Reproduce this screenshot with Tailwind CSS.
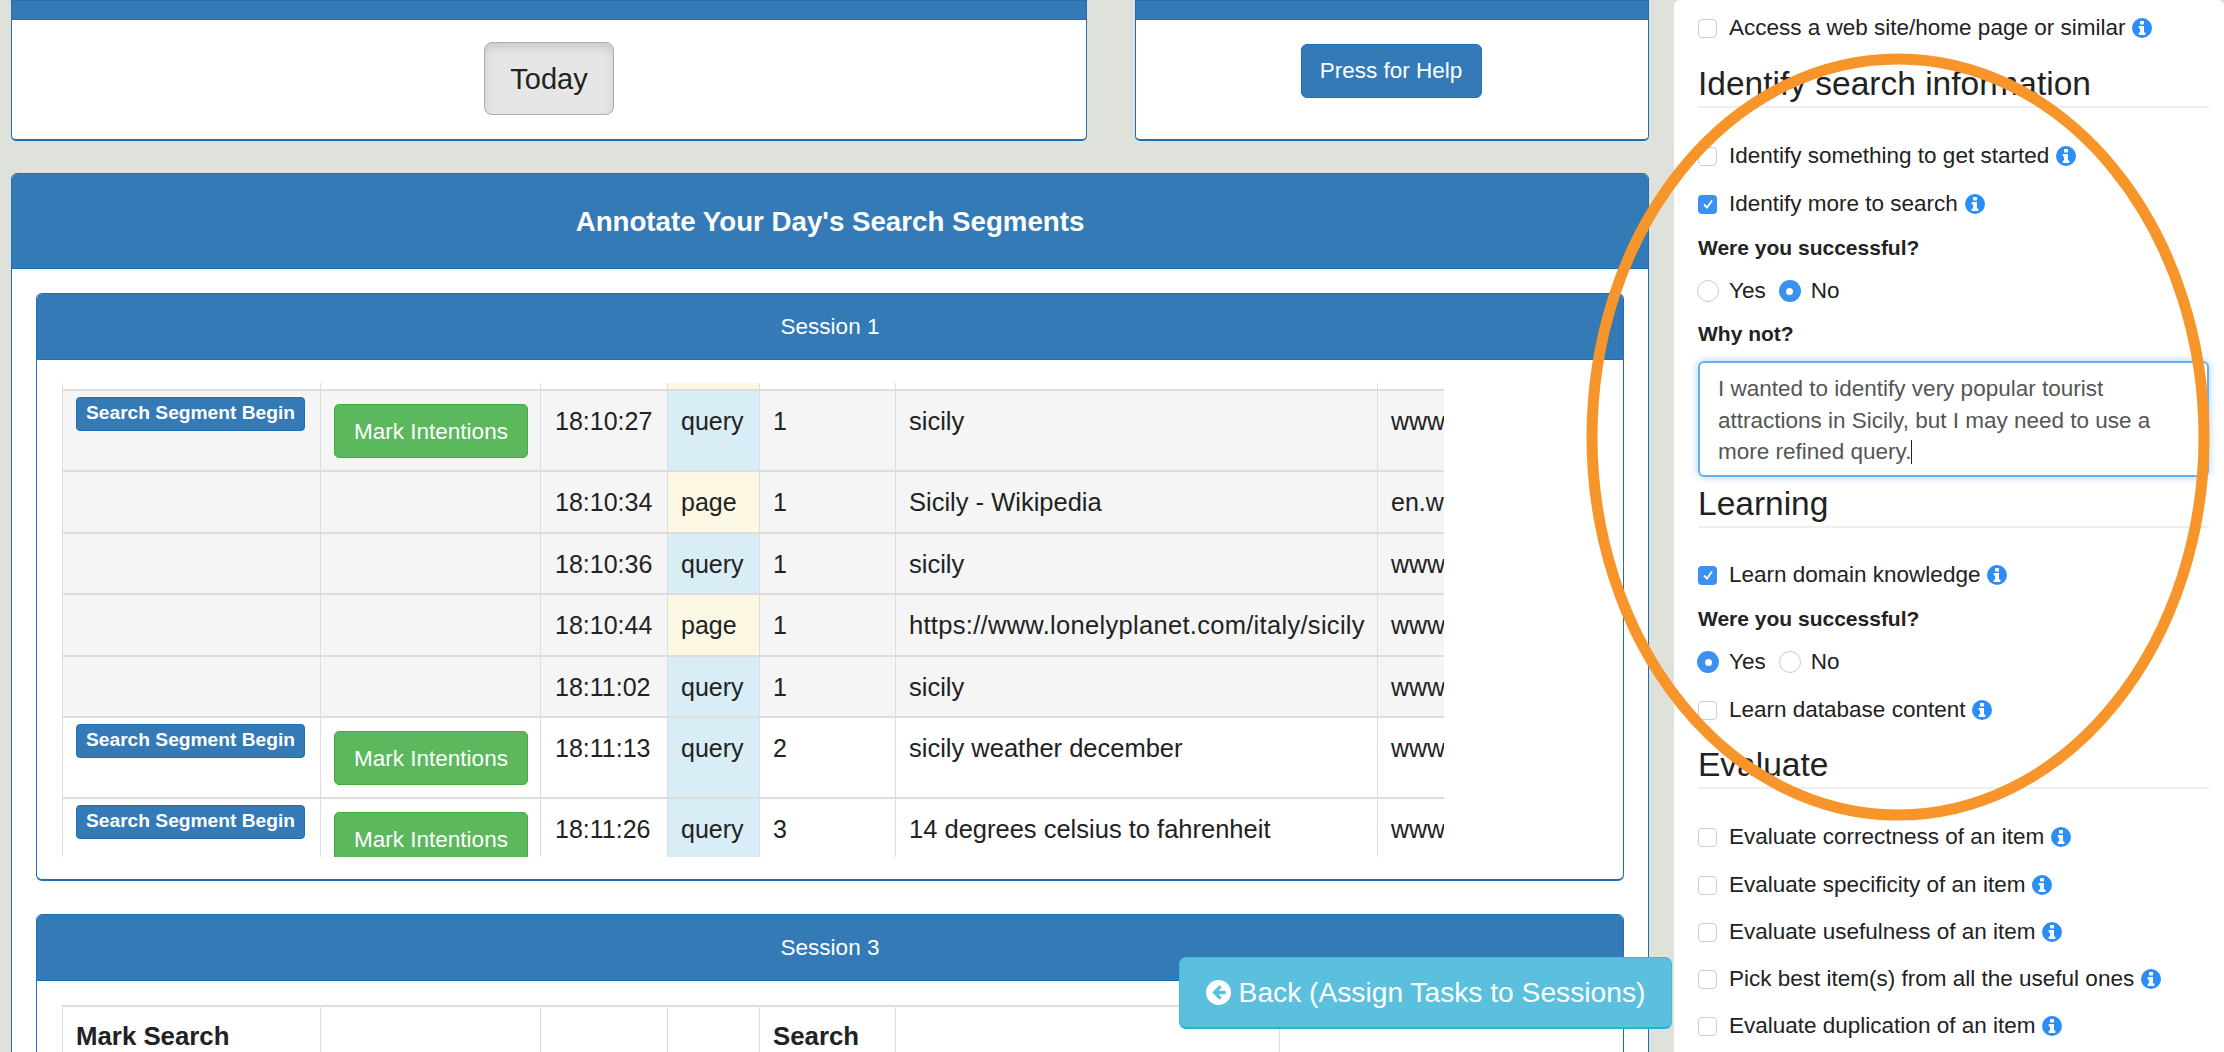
<!doctype html>
<html><head><meta charset="utf-8"><script src="https://cdn.jsdelivr.net/npm/@tailwindcss/browser@4"></script></head>
<body class="bg-[#dfe2db] font-['Liberation_Sans',Arial,sans-serif] text-[#333]">
<div class="relative h-[1052px] w-[2224px] overflow-hidden flex pl-[11px] gap-[25px]">

<div class="w-[1638px] shrink-0">
  <div class="flex gap-[48px] h-[141px]">
    <div class="w-[1076px] bg-white border border-[#1e6fb5] border-b-2 rounded-b-[5px] flex flex-col">
      <div class="h-[19px] bg-[#337ab7] border-b border-[#1e6fb5]"></div>
      <div class="flex-1 flex items-center justify-center pb-[2px]"><button class="w-[130px] h-[73px] bg-[#e6e6e6] border border-[#adadad] rounded-[8px] shadow-[inset_0_5px_8px_rgba(0,0,0,.12)] text-[29px] text-[#222] pt-[3px]">Today</button></div>
    </div>
    <div class="w-[514px] bg-white border border-[#1e6fb5] border-b-2 rounded-b-[5px] flex flex-col">
      <div class="h-[19px] bg-[#337ab7] border-b border-[#1e6fb5]"></div>
      <div class="flex-1 flex justify-center pt-[24px] pr-[2px]"><button class="w-[181px] h-[54px] bg-[#337ab7] border border-[#1e6fb5] rounded-[6px] text-[22.5px] text-white">Press for Help</button></div>
    </div>
  </div>

  <div class="mt-[32px] bg-white border border-[#1e6fb5] rounded-t-[6px] h-[900px]">
    <div class="h-[95px] bg-[#337ab7] border-b border-[#1e6fb5] flex items-center justify-center text-white font-bold text-[27.7px] rounded-t-[5px] pt-[2px]">Annotate Your Day's Search Segments</div>
    <div class="px-[24px] pt-[24px]">

      <div class="border border-[#1e6fb5] border-b-2 rounded-[6px] h-[588px]">
        <div class="h-[66px] bg-[#337ab7] border-b border-[#1e6fb5] rounded-t-[5px] flex items-center justify-center text-white text-[22.5px] pt-[1px]">Session 1</div>
        <div class="pt-[23px] pl-[25px]">
          <div class="w-[1382px] h-[474px] overflow-hidden">
            <table class="table-fixed border-collapse w-[1635px] text-[25px] text-[#222] leading-[33px]">
              <colgroup><col class="w-[258px]"><col class="w-[220px]"><col class="w-[127px]"><col class="w-[92px]"><col class="w-[136px]"><col class="w-[482px]"><col class="w-[320px]"></colgroup>
              <tbody>
                <tr class="h-[7px]"><td class="p-0 border-x border-[#ddd]"></td><td class="p-0 border-x border-[#ddd]"></td><td class="p-0 border-x border-[#ddd]"></td><td class="p-0 border-x border-[#ddd] bg-[#fcf8e3]"></td><td class="p-0 border-x border-[#ddd]"></td><td class="p-0 border-x border-[#ddd]"></td><td class="p-0 border-x border-[#ddd]"></td></tr>

                <tr class="h-[81px] bg-[#f5f5f5] align-top">
                  <td class="border-x border-t-2 border-[#ddd] pt-[6px] pl-[13px]"><button class="w-[229px] h-[34px] bg-[#337ab7] border border-[#1e6fb5] rounded-[4px] text-white font-bold text-[19.2px] leading-[26px] pb-[2px] block">Search Segment Begin</button></td>
                  <td class="border-x border-t-2 border-[#ddd] pt-[13px] pl-[13px]"><button class="w-[194px] h-[54px] bg-[#5cb85c] border border-[#3fad3f] rounded-[5px] text-white text-[22.5px] block">Mark Intentions</button></td>
                  <td class="border-x border-t-2 border-[#ddd] pt-[14px] pl-[14px]">18:10:27</td>
                  <td class="border-x border-t-2 border-[#ddd] pt-[14px] pl-[13px] bg-[#d9edf7]">query</td>
                  <td class="border-x border-t-2 border-[#ddd] pt-[14px] pl-[13px]">1</td>
                  <td class="border-x border-t-2 border-[#ddd] pt-[14px] pl-[13px] text-[25.5px]">sicily</td>
                  <td class="border-x border-t-2 border-[#ddd] pt-[14px] pl-[13px]">www.google.com</td>
                </tr>
                <tr class="h-[62px] bg-[#f5f5f5] align-top">
                  <td class="border-x border-t-2 border-[#ddd]"></td><td class="border-x border-t-2 border-[#ddd]"></td>
                  <td class="border-x border-t-2 border-[#ddd] pt-[14px] pl-[14px]">18:10:34</td>
                  <td class="border-x border-t-2 border-[#ddd] pt-[14px] pl-[13px] bg-[#fcf8e3]">page</td>
                  <td class="border-x border-t-2 border-[#ddd] pt-[14px] pl-[13px]">1</td>
                  <td class="border-x border-t-2 border-[#ddd] pt-[14px] pl-[13px] text-[25.5px]">Sicily - Wikipedia</td>
                  <td class="border-x border-t-2 border-[#ddd] pt-[14px] pl-[13px]">en.wikipedia.org</td>
                </tr>
                <tr class="h-[61px] bg-[#f5f5f5] align-top">
                  <td class="border-x border-t-2 border-[#ddd]"></td><td class="border-x border-t-2 border-[#ddd]"></td>
                  <td class="border-x border-t-2 border-[#ddd] pt-[14px] pl-[14px]">18:10:36</td>
                  <td class="border-x border-t-2 border-[#ddd] pt-[14px] pl-[13px] bg-[#d9edf7]">query</td>
                  <td class="border-x border-t-2 border-[#ddd] pt-[14px] pl-[13px]">1</td>
                  <td class="border-x border-t-2 border-[#ddd] pt-[14px] pl-[13px] text-[25.5px]">sicily</td>
                  <td class="border-x border-t-2 border-[#ddd] pt-[14px] pl-[13px]">www.google.com</td>
                </tr>
                <tr class="h-[62px] bg-[#f5f5f5] align-top">
                  <td class="border-x border-t-2 border-[#ddd]"></td><td class="border-x border-t-2 border-[#ddd]"></td>
                  <td class="border-x border-t-2 border-[#ddd] pt-[14px] pl-[14px]">18:10:44</td>
                  <td class="border-x border-t-2 border-[#ddd] pt-[14px] pl-[13px] bg-[#fcf8e3]">page</td>
                  <td class="border-x border-t-2 border-[#ddd] pt-[14px] pl-[13px]">1</td>
                  <td class="border-x border-t-2 border-[#ddd] pt-[14px] pl-[13px] text-[25.5px] tracking-[0.3px] whitespace-nowrap">https://www.lonelyplanet.com/italy/sicily</td>
                  <td class="border-x border-t-2 border-[#ddd] pt-[14px] pl-[13px]">www.lonelyplanet.com</td>
                </tr>
                <tr class="h-[61px] bg-[#f5f5f5] align-top">
                  <td class="border-x border-t-2 border-[#ddd]"></td><td class="border-x border-t-2 border-[#ddd]"></td>
                  <td class="border-x border-t-2 border-[#ddd] pt-[14px] pl-[14px]">18:11:02</td>
                  <td class="border-x border-t-2 border-[#ddd] pt-[14px] pl-[13px] bg-[#d9edf7]">query</td>
                  <td class="border-x border-t-2 border-[#ddd] pt-[14px] pl-[13px]">1</td>
                  <td class="border-x border-t-2 border-[#ddd] pt-[14px] pl-[13px] text-[25.5px]">sicily</td>
                  <td class="border-x border-t-2 border-[#ddd] pt-[14px] pl-[13px]">www.google.com</td>
                </tr>
                <tr class="h-[81px] align-top">
                  <td class="border-x border-t-2 border-[#ddd] pt-[6px] pl-[13px]"><button class="w-[229px] h-[34px] bg-[#337ab7] border border-[#1e6fb5] rounded-[4px] text-white font-bold text-[19.2px] leading-[26px] pb-[2px] block">Search Segment Begin</button></td>
                  <td class="border-x border-t-2 border-[#ddd] pt-[13px] pl-[13px]"><button class="w-[194px] h-[54px] bg-[#5cb85c] border border-[#3fad3f] rounded-[5px] text-white text-[22.5px] block">Mark Intentions</button></td>
                  <td class="border-x border-t-2 border-[#ddd] pt-[14px] pl-[14px]">18:11:13</td>
                  <td class="border-x border-t-2 border-[#ddd] pt-[14px] pl-[13px] bg-[#d9edf7]">query</td>
                  <td class="border-x border-t-2 border-[#ddd] pt-[14px] pl-[13px]">2</td>
                  <td class="border-x border-t-2 border-[#ddd] pt-[14px] pl-[13px] text-[25.5px]">sicily weather december</td>
                  <td class="border-x border-t-2 border-[#ddd] pt-[14px] pl-[13px]">www.google.com</td>
                </tr>
                <tr class="h-[81px] align-top">
                  <td class="border-x border-t-2 border-[#ddd] pt-[6px] pl-[13px]"><button class="w-[229px] h-[34px] bg-[#337ab7] border border-[#1e6fb5] rounded-[4px] text-white font-bold text-[19.2px] leading-[26px] pb-[2px] block">Search Segment Begin</button></td>
                  <td class="border-x border-t-2 border-[#ddd] pt-[13px] pl-[13px]"><button class="w-[194px] h-[54px] bg-[#5cb85c] border border-[#3fad3f] rounded-[5px] text-white text-[22.5px] block">Mark Intentions</button></td>
                  <td class="border-x border-t-2 border-[#ddd] pt-[14px] pl-[14px]">18:11:26</td>
                  <td class="border-x border-t-2 border-[#ddd] pt-[14px] pl-[13px] bg-[#d9edf7]">query</td>
                  <td class="border-x border-t-2 border-[#ddd] pt-[14px] pl-[13px]">3</td>
                  <td class="border-x border-t-2 border-[#ddd] pt-[14px] pl-[13px] text-[25.5px]">14 degrees celsius to fahrenheit</td>
                  <td class="border-x border-t-2 border-[#ddd] pt-[14px] pl-[13px]">www.google.com</td>
                </tr>
              </tbody>
            </table>
          </div>
        </div>
      </div>

      <div class="mt-[33px] border border-[#1e6fb5] rounded-t-[6px] h-[300px]">
        <div class="h-[66px] bg-[#337ab7] border-b border-[#1e6fb5] rounded-t-[5px] flex items-center justify-center text-white text-[22.5px] pt-[1px]">Session 3</div>
        <div class="pt-[24px] pl-[25px]">
          <table class="table-fixed border-collapse w-full text-[25.8px] text-[#222] leading-[33px] font-bold">
            <colgroup><col class="w-[258px]"><col class="w-[220px]"><col class="w-[127px]"><col class="w-[92px]"><col class="w-[136px]"><col class="w-[384px]"><col></colgroup>
            <tbody><tr class="h-[100px] align-top">
              <td class="border-x border-t-2 border-[#ddd] pt-[13px] pl-[13px]">Mark Search</td>
              <td class="border-x border-t-2 border-[#ddd]"></td>
              <td class="border-x border-t-2 border-[#ddd]"></td>
              <td class="border-x border-t-2 border-[#ddd]"></td>
              <td class="border-x border-t-2 border-[#ddd] pt-[13px] pl-[13px]">Search</td>
              <td class="border-x border-t-2 border-[#ddd]"></td>
              <td class="border-l border-t-2 border-[#ddd]"></td>
            </tr></tbody>
          </table>
        </div>
      </div>
    </div>
  </div>
</div>

<aside class="flex-1 bg-white rounded-t-[6px] pl-[24px] pr-[15px] text-[22.5px] text-[#222]">
  <div class="mt-[4px] h-[48px] flex items-center"><span class="w-[19px] h-[19px] rounded-[4px] border border-[#ccc] mr-[12px] shrink-0"></span>Access a web site/home page or similar<svg class="ml-[7px] w-[20px] h-[20px]" viewBox="0 0 20 20"><circle cx="10" cy="10" r="10" fill="#2b8df5"/><rect x="8" y="3" width="4" height="3.4" rx=".6" fill="#fff"/><path d="M6.7 8h5.3v6.4h1.4V17H6.7v-2.6h1.4v-3.8H6.7z" fill="#fff"/></svg></div>
  <h2 class="mt-[8px] h-[48px] flex items-center border-b-[2px] border-[#eee] text-[33.5px] text-[#222] pt-[2px]">Identify search information</h2>
  <div class="mt-[24px] h-[48px] flex items-center"><span class="w-[19px] h-[19px] rounded-[4px] border border-[#ccc] mr-[12px] shrink-0"></span>Identify something to get started<svg class="ml-[7px] w-[20px] h-[20px]" viewBox="0 0 20 20"><circle cx="10" cy="10" r="10" fill="#2b8df5"/><rect x="8" y="3" width="4" height="3.4" rx=".6" fill="#fff"/><path d="M6.7 8h5.3v6.4h1.4V17H6.7v-2.6h1.4v-3.8H6.7z" fill="#fff"/></svg></div>
  <div class="h-[48px] flex items-center"><span class="w-[19px] h-[19px] rounded-[4px] bg-[#3b90f0] mr-[12px] shrink-0 flex items-center justify-center"><svg class="w-[12px] h-[12px]" viewBox="0 0 12 12"><path d="M2 6.5l3 3 5-7" fill="none" stroke="#fff" stroke-width="1.8"/></svg></span>Identify more to search<svg class="ml-[7px] w-[20px] h-[20px]" viewBox="0 0 20 20"><circle cx="10" cy="10" r="10" fill="#2b8df5"/><rect x="8" y="3" width="4" height="3.4" rx=".6" fill="#fff"/><path d="M6.7 8h5.3v6.4h1.4V17H6.7v-2.6h1.4v-3.8H6.7z" fill="#fff"/></svg></div>
  <div class="h-[40px] flex items-center font-bold text-[21px]">Were you successful?</div>
  <div class="mt-[3px] h-[40px] flex items-center"><span class="w-[22px] h-[22px] -ml-[1px] rounded-full border border-[#ccc] mr-[10px] shrink-0"></span>Yes<span class="w-[22px] h-[22px] rounded-full bg-[#3b90f0] ml-[13px] mr-[10px] shrink-0 flex items-center justify-center"><span class="w-[7px] h-[7px] rounded-full bg-white"></span></span>No</div>
  <div class="mt-[3px] h-[40px] flex items-center font-bold text-[21px]">Why not?</div>
  <div class="mt-[7px] h-[116px] w-[511px] border-2 border-[#66afe9] rounded-[6px] shadow-[0_0_8px_rgba(102,175,233,.6)] pl-[18px] pr-[16px] pt-[10px] text-[22.5px] leading-[31.5px] text-[#555]">I wanted to identify very popular tourist attractions in Sicily, but I may need to use a more refined query.<span class="inline-block w-px h-[24px] bg-[#222] align-[-5px]"></span></div>
  <h2 class="mt-[3px] h-[48px] flex items-center border-b-[2px] border-[#eee] text-[33.5px] text-[#222] pt-[2px]">Learning</h2>
  <div class="mt-[23px] h-[48px] flex items-center"><span class="w-[19px] h-[19px] rounded-[4px] bg-[#3b90f0] mr-[12px] shrink-0 flex items-center justify-center"><svg class="w-[12px] h-[12px]" viewBox="0 0 12 12"><path d="M2 6.5l3 3 5-7" fill="none" stroke="#fff" stroke-width="1.8"/></svg></span>Learn domain knowledge<svg class="ml-[7px] w-[20px] h-[20px]" viewBox="0 0 20 20"><circle cx="10" cy="10" r="10" fill="#2b8df5"/><rect x="8" y="3" width="4" height="3.4" rx=".6" fill="#fff"/><path d="M6.7 8h5.3v6.4h1.4V17H6.7v-2.6h1.4v-3.8H6.7z" fill="#fff"/></svg></div>
  <div class="h-[40px] flex items-center font-bold text-[21px]">Were you successful?</div>
  <div class="mt-[3px] h-[40px] flex items-center"><span class="w-[22px] h-[22px] -ml-[1px] rounded-full bg-[#3b90f0] mr-[10px] shrink-0 flex items-center justify-center"><span class="w-[7px] h-[7px] rounded-full bg-white"></span></span>Yes<span class="w-[22px] h-[22px] rounded-full border border-[#ccc] ml-[13px] mr-[10px] shrink-0"></span>No</div>
  <div class="mt-[4px] h-[48px] flex items-center"><span class="w-[19px] h-[19px] rounded-[4px] border border-[#ccc] mr-[12px] shrink-0"></span>Learn database content<svg class="ml-[7px] w-[20px] h-[20px]" viewBox="0 0 20 20"><circle cx="10" cy="10" r="10" fill="#2b8df5"/><rect x="8" y="3" width="4" height="3.4" rx=".6" fill="#fff"/><path d="M6.7 8h5.3v6.4h1.4V17H6.7v-2.6h1.4v-3.8H6.7z" fill="#fff"/></svg></div>
  <h2 class="mt-[7px] h-[48px] flex items-center border-b-[2px] border-[#eee] text-[33.5px] text-[#222] pt-[2px]">Evaluate</h2>
  <div class="mt-[24px] h-[48px] flex items-center"><span class="w-[19px] h-[19px] rounded-[4px] border border-[#ccc] mr-[12px] shrink-0"></span>Evaluate correctness of an item<svg class="ml-[7px] w-[20px] h-[20px]" viewBox="0 0 20 20"><circle cx="10" cy="10" r="10" fill="#2b8df5"/><rect x="8" y="3" width="4" height="3.4" rx=".6" fill="#fff"/><path d="M6.7 8h5.3v6.4h1.4V17H6.7v-2.6h1.4v-3.8H6.7z" fill="#fff"/></svg></div>
  <div class="h-[48px] flex items-center"><span class="w-[19px] h-[19px] rounded-[4px] border border-[#ccc] mr-[12px] shrink-0"></span>Evaluate specificity of an item<svg class="ml-[7px] w-[20px] h-[20px]" viewBox="0 0 20 20"><circle cx="10" cy="10" r="10" fill="#2b8df5"/><rect x="8" y="3" width="4" height="3.4" rx=".6" fill="#fff"/><path d="M6.7 8h5.3v6.4h1.4V17H6.7v-2.6h1.4v-3.8H6.7z" fill="#fff"/></svg></div>
  <div class="-mt-[1px] h-[48px] flex items-center"><span class="w-[19px] h-[19px] rounded-[4px] border border-[#ccc] mr-[12px] shrink-0"></span>Evaluate usefulness of an item<svg class="ml-[7px] w-[20px] h-[20px]" viewBox="0 0 20 20"><circle cx="10" cy="10" r="10" fill="#2b8df5"/><rect x="8" y="3" width="4" height="3.4" rx=".6" fill="#fff"/><path d="M6.7 8h5.3v6.4h1.4V17H6.7v-2.6h1.4v-3.8H6.7z" fill="#fff"/></svg></div>
  <div class="-mt-[1px] h-[48px] flex items-center"><span class="w-[19px] h-[19px] rounded-[4px] border border-[#ccc] mr-[12px] shrink-0"></span>Pick best item(s) from all the useful ones<svg class="ml-[7px] w-[20px] h-[20px]" viewBox="0 0 20 20"><circle cx="10" cy="10" r="10" fill="#2b8df5"/><rect x="8" y="3" width="4" height="3.4" rx=".6" fill="#fff"/><path d="M6.7 8h5.3v6.4h1.4V17H6.7v-2.6h1.4v-3.8H6.7z" fill="#fff"/></svg></div>
  <div class="-mt-[1px] h-[48px] flex items-center"><span class="w-[19px] h-[19px] rounded-[4px] border border-[#ccc] mr-[12px] shrink-0"></span>Evaluate duplication of an item<svg class="ml-[7px] w-[20px] h-[20px]" viewBox="0 0 20 20"><circle cx="10" cy="10" r="10" fill="#2b8df5"/><rect x="8" y="3" width="4" height="3.4" rx=".6" fill="#fff"/><path d="M6.7 8h5.3v6.4h1.4V17H6.7v-2.6h1.4v-3.8H6.7z" fill="#fff"/></svg></div>
</aside>

<button class="absolute left-[1179px] top-[957px] w-[493px] h-[72px] bg-[#5bc0de] border border-[#46b8da] border-b-2 border-b-[#1fb4de] rounded-[7px] text-white text-[28.2px] flex items-center justify-center gap-[8px]"><svg class="w-[25px] h-[25px]" viewBox="0 0 26 26"><circle cx="13" cy="13" r="13" fill="#fff"/><path d="M14 5.500l-7.500 7.500 7.500 7.500 2.400-2.400-3.400-3.400H20.500v-3.400H13l3.400-3.400z" fill="#5bc0de"/></svg>Back (Assign Tasks to Sessions)</button>

<svg class="absolute left-[1580px] top-[48px] w-[640px] h-[780px] pointer-events-none" viewBox="0 0 640 780"><ellipse cx="318" cy="389" rx="306" ry="378" fill="none" stroke="#f8952a" stroke-width="11"/></svg>
</div>
</body></html>
